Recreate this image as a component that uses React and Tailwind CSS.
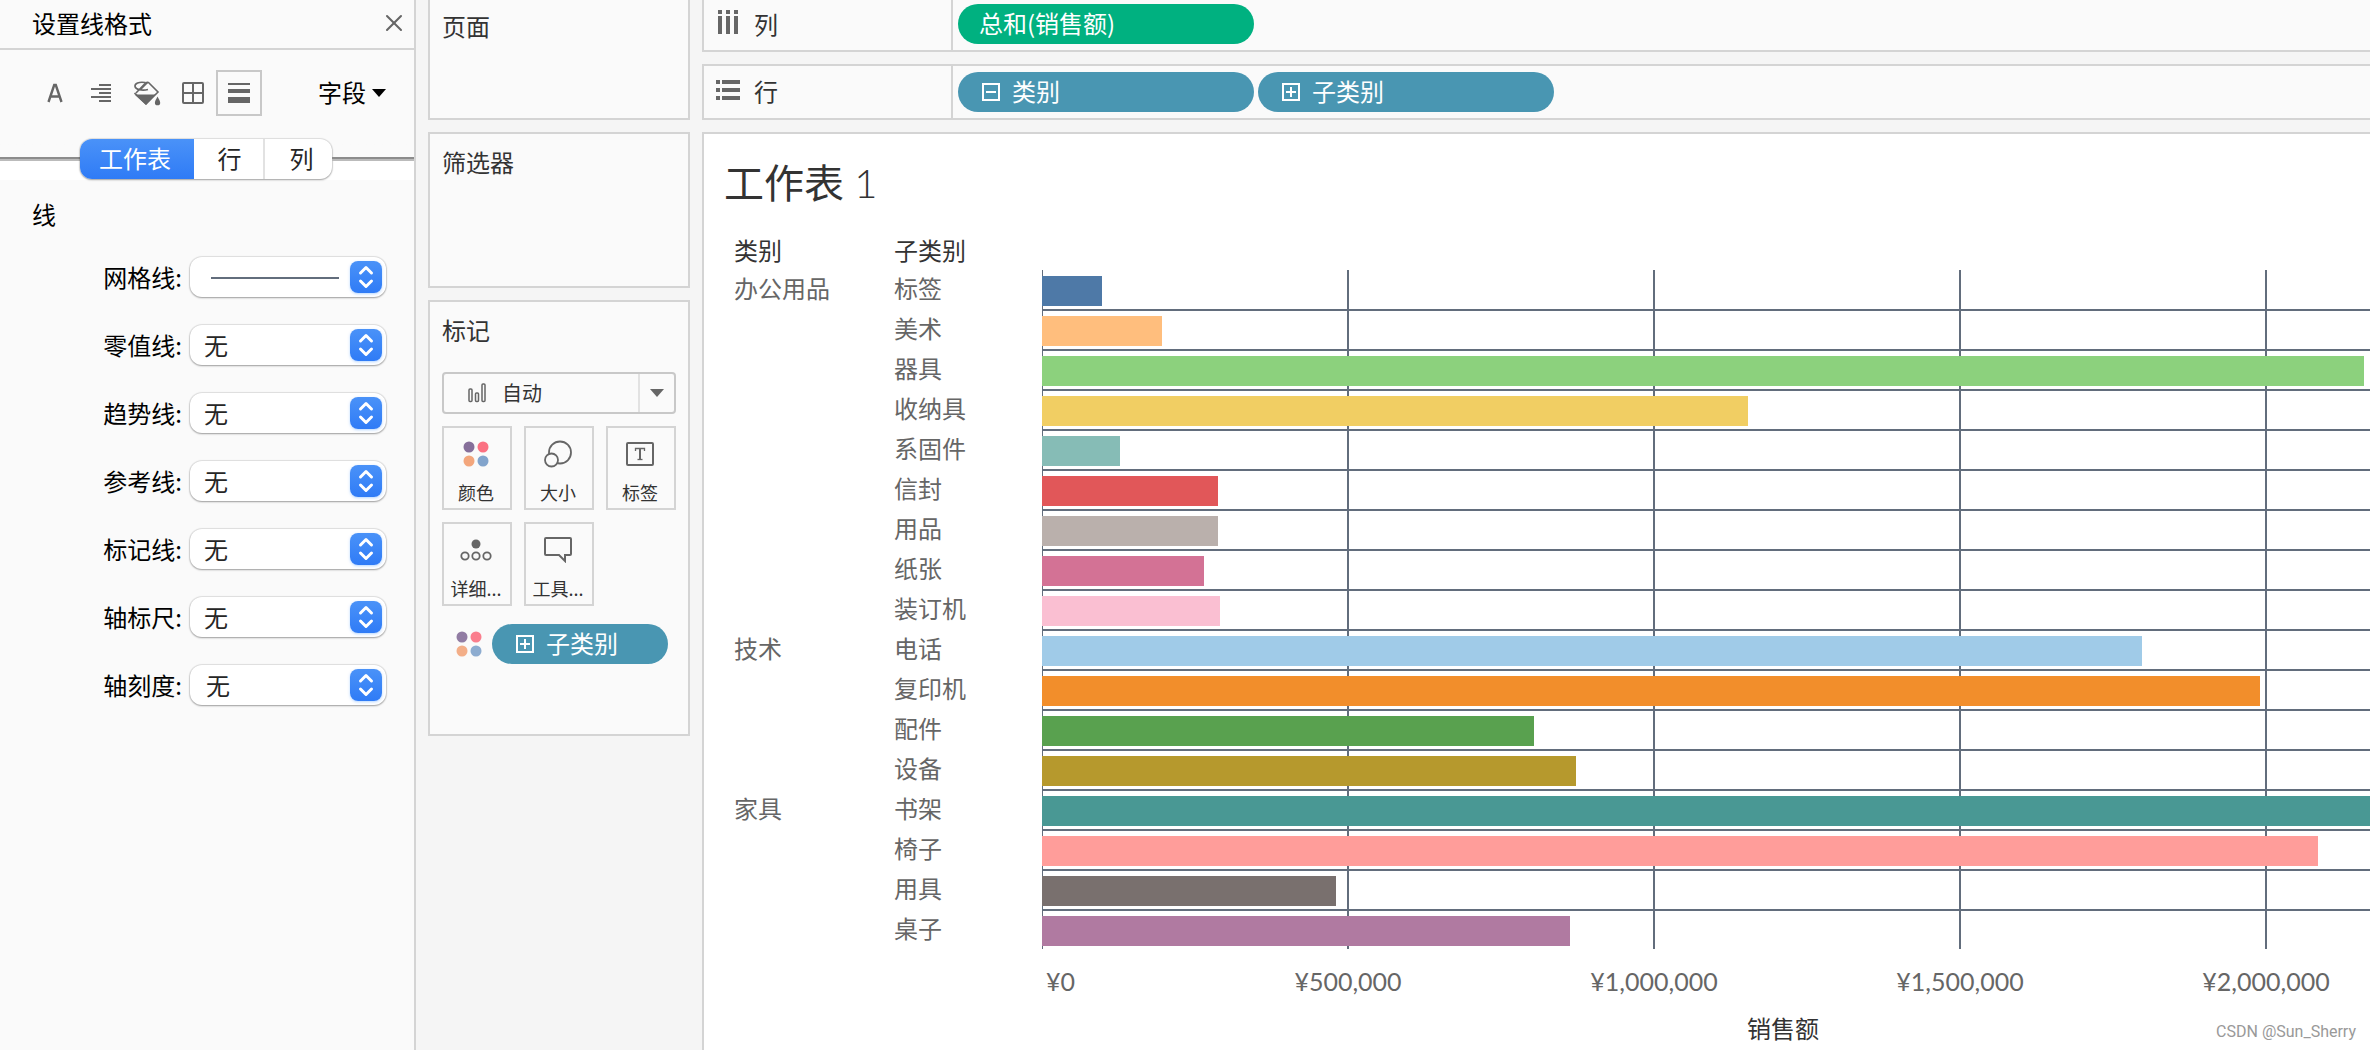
import React, { useState } from 'react';
import { X } from 'lucide-react';
import clsx from 'clsx';

const TABS = ['工作表', '行', '列'];

const LINE_OPTIONS = [
  { id: 'grid', label: '网格线' },
  { id: 'zero', label: '零值线' },
  { id: 'trend', label: '趋势线' },
  { id: 'reference', label: '参考线' },
  { id: 'drop', label: '标记线' },
  { id: 'ruler', label: '轴标尺' },
  { id: 'tick', label: '轴刻度' },
];

// one axis step (¥500,000) takes 306px
const STEP = 306;
const ROW = 40;

const ROWS = [
  { category: '办公用品', name: '标签', width: 60, color: '#4e79a7' },
  { name: '美术', width: 120, color: '#ffbe7d' },
  { name: '器具', width: 1322, color: '#8cd17d' },
  { name: '收纳具', width: 706, color: '#f1ce63' },
  { name: '系固件', width: 78, color: '#86bcb6' },
  { name: '信封', width: 176, color: '#e15759' },
  { name: '用品', width: 176, color: '#bab0ac' },
  { name: '纸张', width: 162, color: '#d37295' },
  { name: '装订机', width: 178, color: '#fabfd2' },
  { category: '技术', name: '电话', width: 1100, color: '#a0cbe8' },
  { name: '复印机', width: 1218, color: '#f28e2b' },
  { name: '配件', width: 492, color: '#59a14f' },
  { name: '设备', width: 534, color: '#b6992d' },
  { category: '家具', name: '书架', width: 1400, color: '#499894' },
  { name: '椅子', width: 1276, color: '#ff9d9a' },
  { name: '用具', width: 294, color: '#79706e' },
  { name: '桌子', width: 528, color: '#b07aa1' },
];

const TICKS = ['¥500,000', '¥1,000,000', '¥1,500,000', '¥2,000,000'];

const ColorDots = () => (
  <svg width="26" height="26" viewBox="0 0 26 26">
    <circle cx="6" cy="6" r="5.5" fill="#866f9a" />
    <circle cx="20" cy="6" r="5.5" fill="#fb7182" />
    <circle cx="6" cy="20" r="5.5" fill="#f3a67c" />
    <circle cx="20" cy="20" r="5.5" fill="#82a4cc" />
  </svg>
);

const FORMAT_TOOLS = [
  {
    id: 'font',
    title: '字体',
    icon: (
      <svg width="16" height="20" viewBox="0 0 16 20" fill="none" stroke="#666" strokeWidth="2.4">
        <path d="M1.5 19 7.2 2h1.6L14.5 19M3.6 13.5h8.8" />
      </svg>
    ),
  },
  {
    id: 'align',
    title: '对齐',
    icon: (
      <svg width="20" height="18" viewBox="0 0 20 18" fill="#666">
        <path d="M8 0h12v2H8zM0 4h20v2H0zM8 8h12v2H8zM0 12h20v2H0zM8 16h12v2H8z" />
      </svg>
    ),
  },
  {
    id: 'shade',
    title: '阴影',
    icon: (
      <svg width="28" height="26" viewBox="0 0 28 26">
        <path d="M3 13 13 2.5h2.5L25 12 13 24 1.5 13" fill="none" stroke="#666" strokeWidth="1.6" />
        <path d="M1.5 14.5h21L13 25z" fill="#666" />
        <path d="M12 2.5C6 1.5 1.5 3.5 2 6.5c.5 3 7 4.5 13 3M15 2 7 10" fill="none" stroke="#666" strokeWidth="1.6" />
        <path d="M24.5 16.5c1.5 3 2.7 4.600 2.7 6.200a2.600 2.600 0 0 1-5.300 0c0-1.600 1.200-3.200 2.600-6.200z" fill="#666" />
      </svg>
    ),
  },
  {
    id: 'border',
    title: '边界',
    icon: (
      <svg width="22" height="22" viewBox="0 0 22 22" fill="none" stroke="#666" strokeWidth="2">
        <rect x="1" y="1" width="20" height="20" rx="1" />
        <path d="M11 1v20M1 11h20" />
      </svg>
    ),
  },
  {
    id: 'lines',
    title: '线',
    icon: (
      <svg width="22" height="20" viewBox="0 0 22 20" fill="#666">
        <path d="M0 0h22v2H0zM0 6h22v4H0zM0 14h22v6H0z" />
      </svg>
    ),
  },
];

const MARKS = [
  { label: '颜色', icon: <ColorDots /> },
  {
    label: '大小',
    icon: (
      <svg width="28" height="28" viewBox="0 0 28 28" fill="#fafafa" stroke="#666" strokeWidth="1.8">
        <circle cx="16" cy="12.5" r="11" />
        <circle cx="7.5" cy="20" r="6.5" />
      </svg>
    ),
  },
  {
    label: '标签',
    icon: (
      <svg width="28" height="24" viewBox="0 0 28 24" fill="none" stroke="#666">
        <rect x="1" y="1" width="26" height="22" rx="1" strokeWidth="2" />
        <path d="M9.5 9V6.500h9V9" strokeWidth="1.300" />
        <path d="M14 6.500V17.500" strokeWidth="2" />
        <path d="M11.500 17.500h5" strokeWidth="1.300" />
      </svg>
    ),
  },
  {
    label: '详细...',
    icon: (
      <svg width="32" height="22" viewBox="0 0 32 22" fill="none" stroke="#666" strokeWidth="1.8">
        <circle cx="16" cy="5" r="4.5" fill="#666" stroke="none" />
        <circle cx="5" cy="17" r="3.7" />
        <circle cx="16" cy="17" r="3.7" />
        <circle cx="27" cy="17" r="3.7" />
      </svg>
    ),
  },
  {
    label: '工具...',
    icon: (
      <svg width="28" height="26" viewBox="0 0 28 26" fill="none" stroke="#666" strokeWidth="2">
        <path d="M2 1h24a1 1 0 0 1 1 1v15a1 1 0 0 1-1 1h-5v6l-6-6H2a1 1 0 0 1-1-1V2a1 1 0 0 1 1-1z" />
      </svg>
    ),
  },
];

const Pill = ({ children, icon, className }) => (
  <button
    className={clsx(
      'flex h-10 items-center rounded-full text-2xl text-white',
      icon ? 'gap-3 bg-[#4996b2] pl-6' : 'bg-[#00b180] pl-[21px]',
      className
    )}
  >
    {icon && (
      <svg width="18" height="18" viewBox="0 0 18 18" fill="none" stroke="#fff" strokeWidth="2">
        <rect x="1" y="1" width="16" height="16" />
        <path d={icon === 'plus' ? 'M4 9h10M9 4v10' : 'M4 9h10'} />
      </svg>
    )}
    <span className="pb-0.5">{children}</span>
  </button>
);

const LineSelect = ({ id, label }) => {
  const isGrid = id === 'grid';
  return (
    <div className="flex items-center">
      <label htmlFor={id} className="w-[184px] pr-0.5 text-right">{label}:</label>
      <div className="relative ml-1.5">
        <select
          id={id}
          className={clsx(
            'block h-10 w-[196px] appearance-none rounded-xl bg-white text-2xl text-[#262626] shadow-[0_0_1px_1px_rgba(0,0,0,0.1),0_1px_2px_rgba(0,0,0,0.3)] outline-none',
            id === 'tick' ? 'pl-4' : 'pl-3.5'
          )}
        >
          {isGrid ? <option value="solid" aria-label="实线" /> : <option>无</option>}
        </select>
        {isGrid && <span className="pointer-events-none absolute top-5 left-[21px] h-0.5 w-32 bg-[#626d7c]" />}
        <span className="pointer-events-none absolute top-1 right-1 flex size-8 items-center justify-center rounded-lg bg-linear-to-b from-[#4a92f8] to-[#2f7bf6] shadow-sm shadow-blue-200">
          <svg width="16" height="24" viewBox="0 0 16 24" fill="none" stroke="#fff" strokeWidth="3" strokeLinecap="round" strokeLinejoin="round">
            <path d="M2.5 8 8 2.5 13.5 8M2.5 16 8 21.5 13.5 16" />
          </svg>
        </span>
      </div>
    </div>
  );
};

const FormatPanel = () => {
  const [tab, setTab] = useState('工作表');
  const [tool, setTool] = useState('lines');

  return (
    <aside className="w-[416px] shrink-0 border-r-2 border-[#d4d4d4] bg-[#fafafa] text-2xl text-black">
      <div className="flex h-[50px] items-center justify-between border-b-2 border-[#d4d4d4] pr-1.5 pb-0.5 pl-8">
        <h2>设置线格式</h2>
        <button title="关闭">
          <X size={28} strokeWidth={1.75} className="text-[#666]" />
        </button>
      </div>

      <div className="flex items-center pt-5 pl-8">
        {FORMAT_TOOLS.map(t => (
          <button
            key={t.id}
            title={t.title}
            onClick={() => setTool(t.id)}
            className={clsx(
              'flex size-[46px] items-center justify-center border-2',
              tool === t.id ? 'border-[#c8c8c8]' : 'border-transparent'
            )}
          >
            {t.icon}
          </button>
        ))}
        <button className="ml-14 flex items-center gap-1.5">
          <span className="pb-0.5">字段</span>
          <svg width="14" height="8" viewBox="0 0 14 8">
            <path d="M0 0h14L7 8z" />
          </svg>
        </button>
      </div>

      <div className="mt-[23px] flex h-[41px] bg-linear-to-b from-[#fafafa] from-50% to-white to-50%">
        <span className="mt-[18px] h-1 w-20 border-t-2 border-[#8c8c8c] bg-[#bbb]" />
        <div className="flex h-10 rounded-xl bg-white shadow-[0_0_1px_1px_rgba(0,0,0,0.1),0_1px_2px_rgba(0,0,0,0.3)]">
          {TABS.map(name => (
            <button
              key={name}
              onClick={() => setTab(name)}
              className={clsx(
                'w-[69px] pb-0.5 pl-0.5 first:w-[114px] first:rounded-l-xl first:pr-1.5 last:rounded-r-xl last:border-l-2 last:border-[#e2e2e2] last:pl-1.5',
                tab === name ? 'bg-linear-to-b from-[#4a92f8] to-[#2f7bf6] text-white' : 'text-[#262626]'
              )}
            >
              {name}
            </button>
          ))}
        </div>
        <span className="mt-[18px] h-1 flex-1 border-t-2 border-[#8c8c8c] bg-[#bbb]" />
      </div>

      <h3 className="mt-4 pl-8 leading-9">线</h3>
      <div className="mt-[25px] flex flex-col gap-7">
        {LINE_OPTIONS.map(o => (
          <LineSelect key={o.id} {...o} />
        ))}
      </div>
    </aside>
  );
};

const Cards = () => (
  <div className="flex w-[262px] shrink-0 flex-col gap-3 text-2xl text-[#333]">
    <section className="h-[120px] border-2 border-t-0 border-[#d4d4d4] bg-[#fafafa] px-3 pt-2.5">
      <h3>页面</h3>
    </section>
    <section className="h-[156px] border-2 border-[#d4d4d4] bg-[#fafafa] px-3 pt-3">
      <h3>筛选器</h3>
    </section>
    <section className="h-[436px] border-2 border-[#d4d4d4] bg-[#fafafa] px-3 pt-3">
      <h3>标记</h3>
      <button className="mt-[26px] flex h-[42px] w-full items-center rounded-sm border-2 border-[#c8c8c8] pl-6 text-xl">
        <svg width="18" height="20" viewBox="0 0 18 20" fill="none" stroke="#666" strokeWidth="1.5">
          <rect x="1" y="6" width="3" height="12.5" rx="1" />
          <rect x="7.5" y="10" width="3" height="8.5" rx="1" />
          <rect x="14" y="1" width="3" height="17.5" rx="1" />
        </svg>
        <span className="ml-4">自动</span>
        <span className="ml-auto flex h-full w-9 items-center justify-center border-l-2 border-[#e2e2e2]">
          <svg width="14" height="8" viewBox="0 0 14 8" fill="#666">
            <path d="M0 0h14L7 8z" />
          </svg>
        </span>
      </button>
      <div className="mt-3 grid grid-cols-3 gap-3">
        {MARKS.map(m => (
          <button key={m.label} className="flex h-[84px] flex-col items-center border-2 border-[#d4d4d4] pt-2.5 pr-0.5 text-lg leading-6">
            <span className="flex h-8 items-center">{m.icon}</span>
            <span className="mt-2.5">{m.label}</span>
          </button>
        ))}
      </div>
      <div className="mt-[18px] flex items-center pl-3.5">
        <span className="opacity-90">
          <ColorDots />
        </span>
        <Pill icon="plus" className="ml-2.5 w-44">子类别</Pill>
      </div>
    </section>
  </div>
);

const Shelf = ({ label, icon, className, children }) => (
  <div className={clsx('flex border-2 border-r-0 border-[#d4d4d4] bg-[#fafafa]', className)}>
    <div className="flex w-[249px] shrink-0 items-center border-r-2 border-[#d4d4d4] pl-3 text-2xl text-[#333]">
      {icon}
      <span className="ml-3.5 pb-0.5">{label}</span>
    </div>
    <div className="flex items-center gap-1 pl-[5px]">{children}</div>
  </div>
);

const Plot = () => (
  <svg className="block h-[679px] w-full" shapeRendering="crispEdges">
    <rect width="1" height="679" fill="#626d7c" />
    {TICKS.map((t, i) => (
      <rect key={t} x={(i + 1) * STEP - 1} width="2" height="679" fill="#626d7c" />
    ))}
    {ROWS.slice(1).map((r, i) => (
      <rect key={r.name} y={(i + 1) * ROW - 1} width="100%" height="2" fill="#626d7c" />
    ))}
    {ROWS.map((r, i) => (
      <rect key={r.name} y={i * ROW + 6} width={r.width} height="30" fill={r.color} />
    ))}
  </svg>
);

const Worksheet = () => (
  <main className="flex-1 overflow-hidden border-t-2 border-l-2 border-[#d4d4d4] bg-white pl-5">
    <h1 className="pt-[25px] font-['Lato','Noto_Sans_CJK_SC',sans-serif] text-[40px] leading-[48px] text-[#333]">
      工作表 <span className="font-light">1</span>
    </h1>

    <div className="mt-[23px] flex items-start">
      <table className="w-[318px] shrink-0 table-fixed text-left text-2xl leading-8">
        <thead>
          <tr className="h-[38px] align-top text-[#333]">
            <th className="w-[170px] pt-1 pl-2.5 font-normal">类别</th>
            <th className="pt-1 font-normal">子类别</th>
          </tr>
        </thead>
        <tbody className="text-[#666]">
          {ROWS.map(r => (
            <tr key={r.name} className="h-10">
              <td className="pl-2.5">{r.category}</td>
              <td>{r.name}</td>
            </tr>
          ))}
        </tbody>
      </table>

      <div className="min-w-0 flex-1 pt-10">
        <Plot />
        <div className="mt-3.5 flex overflow-hidden font-['Lato','Noto_Sans_CJK_SC',sans-serif] text-[25px] leading-9 text-[#666]">
          <span className="w-[153px] shrink-0 pl-1">¥0</span>
          {TICKS.map(t => (
            <span key={t} className="w-[306px] shrink-0 text-center">{t}</span>
          ))}
        </div>
        <div className="relative mt-[13px] pl-[154px] text-center text-2xl text-[#333]">
          销售额
          <span className="absolute right-3.5 bottom-0 font-['Roboto',sans-serif] text-base leading-6 text-[#999]">CSDN @Sun_Sherry</span>
        </div>
      </div>
    </div>
  </main>
);

const App = () => (
  <div className="flex min-h-screen gap-3 overflow-hidden bg-[#f5f5f5] font-['Noto_Sans_CJK_SC','Liberation_Sans',sans-serif]">
    <FormatPanel />
    <Cards />
    <div className="flex min-w-0 flex-1 flex-col gap-3">
      <Shelf
        label="列"
        className="h-[52px] border-t-0"
        icon={
          <svg width="24" height="24" viewBox="0 0 24 24" fill="#666" className="-mt-1.5">
            <path d="M2 0h4v4H2zM10 0h4v4h-4zM18 0h4v4h-4zM2 6h4v18H2zM10 6h4v18h-4zM18 6h4v18h-4z" />
          </svg>
        }
      >
        <Pill className="-mt-0.5 w-[296px]">总和(销售额)</Pill>
      </Shelf>
      <Shelf
        label="行"
        className="h-14"
        icon={
          <svg width="24" height="20" viewBox="0 0 24 20" fill="#666" className="-mt-1">
            <path d="M0 0h4v4H0zM6 0h18v4H6zM0 8h4v4H0zM6 8h18v4H6zM0 16h4v4H0zM6 16h18v4H6z" />
          </svg>
        }
      >
        <Pill icon="minus" className="w-[296px]">类别</Pill>
        <Pill icon="plus" className="w-[296px]">子类别</Pill>
      </Shelf>
      <Worksheet />
    </div>
  </div>
);

export default App;
